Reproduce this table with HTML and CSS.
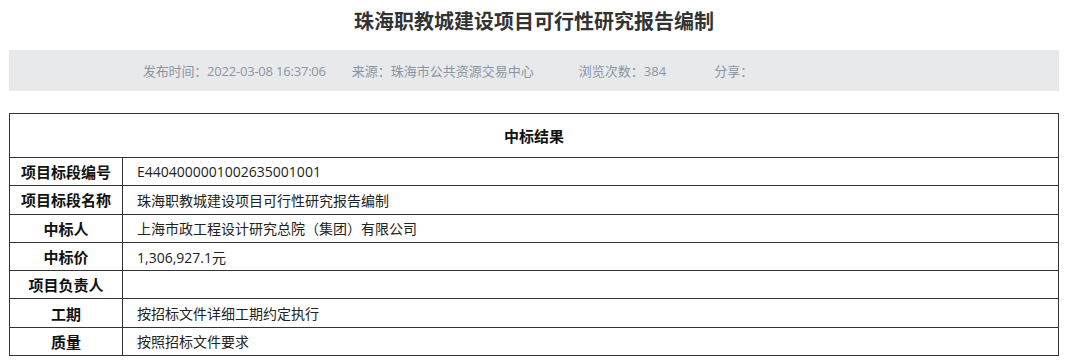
FILE: index.html
```html
<!DOCTYPE html>
<html lang="zh-CN">
<head>
<meta charset="utf-8">
<title>珠海职教城建设项目可行性研究报告编制</title>
<link rel="stylesheet" href="styles.css">
</head>
<body>
<div class="page">
  <h1 class="title">珠海职教城建设项目可行性研究报告编制</h1>
  <div class="meta">
    <span class="meta-item time">发布时间：2022-03-08 16:37:06</span>
    <span class="meta-item source">来源：珠海市公共资源交易中心</span>
    <span class="meta-item views">浏览次数：384</span>
    <span class="meta-item">分享：</span>
  </div>
  <table class="result">
    <tr class="head"><th colspan="2">中标结果</th></tr>
    <tr><th class="label">项目标段编号</th><td class="value">E4404000001002635001001</td></tr>
    <tr><th class="label">项目标段名称</th><td class="value">珠海职教城建设项目可行性研究报告编制</td></tr>
    <tr><th class="label">中标人</th><td class="value">上海市政工程设计研究总院（集团）有限公司</td></tr>
    <tr><th class="label">中标价</th><td class="value">1,306,927.1元</td></tr>
    <tr><th class="label">项目负责人</th><td class="value"></td></tr>
    <tr><th class="label">工期</th><td class="value">按招标文件详细工期约定执行</td></tr>
    <tr><th class="label">质量</th><td class="value">按照招标文件要求</td></tr>
  </table>
</div>
</body>
</html>
```
FILE: styles.css
```css
html, body {
  margin: 0;
  padding: 0;
  background: #fff;
}
body {
  font-family: "Open Sans", "Noto Sans CJK SC", sans-serif;
  color: #222;
}
.page {
  padding: 0 21px 0 9px;
}
.title {
  margin: 0;
  height: 50px;
  line-height: 42px;
  font-size: 20px;
  font-weight: bold;
  text-align: center;
  color: #333;
  font-family: "Noto Sans CJK SC", sans-serif;
}
.meta {
  height: 41px;
  background: #e8e9eb;
  display: flex;
  align-items: center;
  padding-left: 134px;
  font-size: 13px;
  color: #8a95a2;
}
.meta-item { white-space: nowrap; }
.meta .time { letter-spacing: -0.2px; }
.meta .source { margin-left: 26px; }
.meta .views { margin-left: 45px; }
.meta .views + .meta-item { margin-left: 48px; }
.result {
  margin-top: 22px;
  width: 100%;
  border-collapse: collapse;
  border: 1px solid #444;
  font-size: 14px;
}
.result th, .result td {
  border: 1px solid #333;
  padding: 0;
}
.head th {
  height: 43px;
  font-size: 15px;
  font-weight: bold;
  color: #111;
  text-align: center;
  font-family: "Noto Sans CJK SC", sans-serif;
}
.label {
  width: 112px;
  height: 27.3px;
  font-size: 15px;
  font-weight: bold;
  text-align: center;
  color: #111;
  font-family: "Noto Sans CJK SC", sans-serif;
}
.value {
  padding-left: 14px !important;
  text-align: left;
  color: #222;
}
```
